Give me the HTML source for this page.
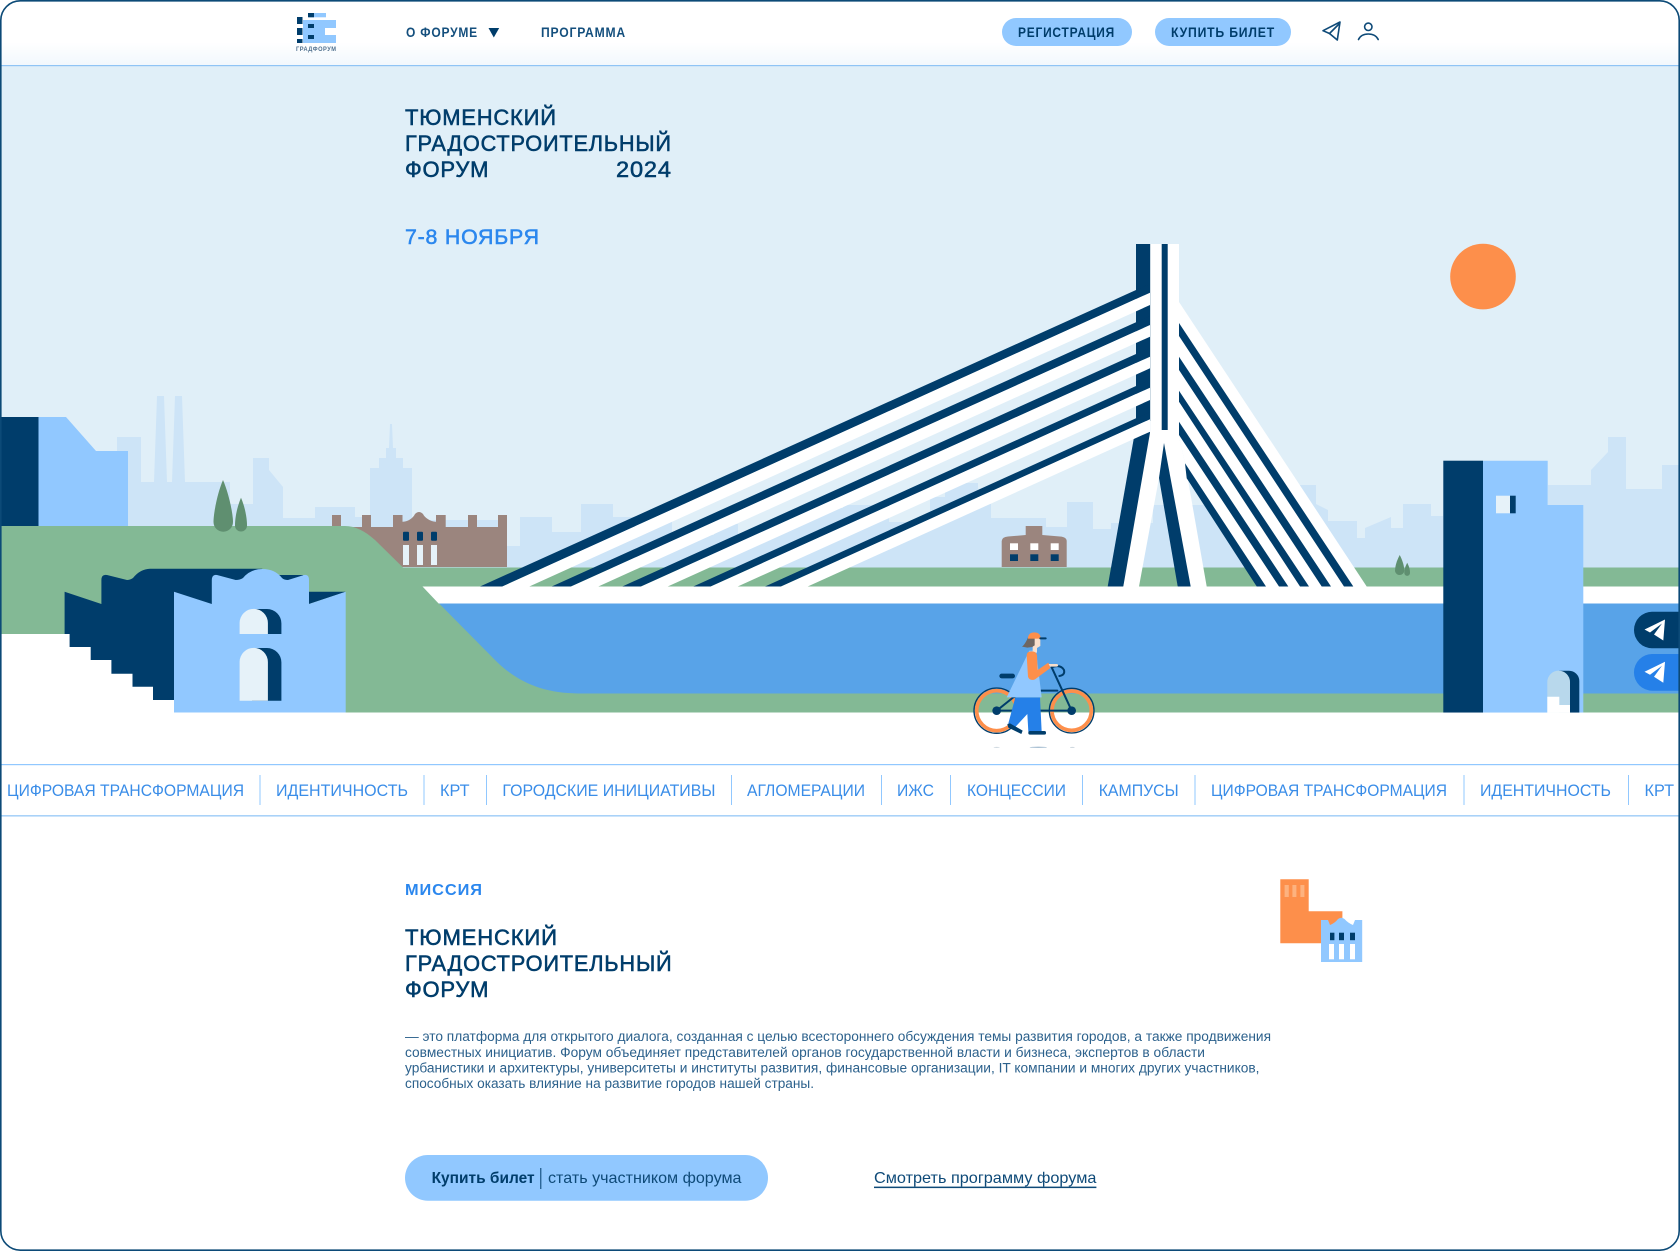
<!DOCTYPE html>
<html lang="ru">
<head>
<meta charset="utf-8">
<title>Тюменский градостроительный форум</title>
<style>
html,body{margin:0;padding:0;background:#fff;width:1680px;height:1251px;overflow:hidden}
svg{display:block;font-family:"Liberation Sans","Noto Sans CJK SC",sans-serif}
.n{fill:#003d6b}
.l{fill:#91c8ff}
.m{stroke:currentColor;stroke-width:.55px}
text{white-space:pre}
</style>
</head>
<body>
<svg xmlns="http://www.w3.org/2000/svg" width="1680" height="1251" viewBox="0 0 1680 1251">
<defs>
<linearGradient id="hd" x1="0" y1="0" x2="0" y2="1"><stop offset="0" stop-color="#fff"/><stop offset=".65" stop-color="#fff"/><stop offset="1" stop-color="#f2f8fd"/></linearGradient>
</defs>
<rect width="1680" height="1251" fill="#fff"/>

<!-- sky -->
<rect y="66" width="1680" height="530" fill="#e0eff8"/>
<!-- skyline -->
<path fill="#cde4f7" d="M117 530V437H141V482H154L157 396H164L167 482H172L175 396H182L185 482H230V504H253V458H269V470L283 487V518H315V507H355V517H370V468H379V458H386V448H389L390 424H392L393 448H396V458H403V468H412V520H507V546H520V517H552V532H581V504H613V517H672V535H714V524H738V535H778V522H803V508H843V505H889V522H930V497H945V483H978V504H991V518H1046V527H1067V502H1093V529H1111V523H1153V505H1300V485H1316V504L1328 510V521H1357V538H1365V528L1391 517V528H1403V504H1431V516H1443V540H1548V485H1591V470L1608 452V437H1626V489H1662V465H1680V575H117Z"/>
<!-- sun -->
<circle cx="1483" cy="276.6" r="32.8" fill="#fd8f4b"/>

<!-- left tall block -->
<rect x="0" y="417" width="38.5" height="112" class="n"/>
<path class="l" d="M38.5 417H66L96 451H128V529H38.5Z"/>

<!-- brown palace -->
<path fill="#9b857e" d="M332 567V515H341V527H362V515H371V527H393V515H402.5V521.7C408 522 413 518 415 514Q419 510 423 514C425 518 431 522 436 521.7V515H445.7V527H468V515H477V527H498V515H507V567Z"/>
<g class="n"><rect x="403" y="531.7" width="6" height="9" rx="1"/><rect x="417" y="531.7" width="6" height="9" rx="1"/><rect x="431" y="531.7" width="6" height="9" rx="1"/></g>
<g fill="#e6f2f9"><rect x="403" y="545" width="6" height="20"/><rect x="417" y="545" width="6" height="20"/><rect x="431" y="545" width="6" height="20"/></g>

<!-- small brown house -->
<path fill="#9b857e" d="M1001.7 567V541Q1002 537 1008 536.5L1025.7 535V526H1042.3V535L1060 536.5Q1066.5 537 1066.7 541V567Z"/>
<g fill="#fff"><rect x="1010" y="543.3" width="8" height="6.7"/><rect x="1030.3" y="543.3" width="8" height="6.7"/><rect x="1050.7" y="543.3" width="8" height="6.7"/></g>
<g class="n"><rect x="1010" y="554.3" width="8" height="6.7"/><rect x="1030.3" y="554.3" width="8" height="6.7"/><rect x="1050.7" y="554.3" width="8" height="6.7"/></g>

<!-- green land -->
<path fill="#83b995" d="M0 526H345C355 526 365 531 375 540L403 567.5H1680V712.5H0Z"/>

<!-- trees -->
<g fill="#5f8f70">
<path d="M223 480C217 494 213.5 514 213.5 522A9.75 9.75 0 0 0 233 522C233 514 229 494 223 480Z"/>
<path d="M241 497.7C237 507 235 518 235 525.5A6 6 0 0 0 247 525.5C247 518 245 507 241 497.7Z"/>
<path d="M1399.7 555C1397 560 1395 566 1395 571A4.7 4.7 0 0 0 1404.3 571C1404.3 566 1402.4 560 1399.7 555Z"/>
<path d="M1407.2 562.7C1405.5 566 1404.3 569 1404.3 573A2.85 2.85 0 0 0 1410 573C1410 569 1408.9 566 1407.2 562.7Z"/>
</g>

<!-- deck and water -->
<path fill="#58a3e8" d="M438.6 603H1680V693.5H578C545 693 520 684 497 662Z"/>
<path fill="#fff" d="M422.5 586.5H1680V603.5H438.6Z"/>

<!-- bridge cables left -->
<rect x="1136" y="244" width="14.3" height="177" class="n"/>
<g class="n">
<path d="M480 586.5L1136 290L1150 284V292.7L502.3 586.5Z"/>
<path d="M551.7 586.5L1136 322.3L1150 316V325L571 586.5Z"/>
<path d="M622.3 586.5L1136 354L1150 348V356.7L641 586.5Z"/>
<path d="M693.3 586.5L1136 386L1150 380V387.7L710.7 586.5Z"/>
<path d="M765 586.5L1136 418.3L1150 412V419.3L781 586.5Z"/>
<path d="M1107.7 586.5L1134 437.3L1150 431.7V470L1123.3 586.5Z"/>
</g>
<g fill="#fff">
<path d="M502.3 586.5L1150 292.7V305L529.3 586.5Z"/>
<path d="M571 586.5L1150 325V336.7L598.3 586.5Z"/>
<path d="M641 586.5L1150 356.7V368.3L667.7 586.5Z"/>
<path d="M710.7 586.5L1150 387.7V400L737.7 586.5Z"/>
<path d="M781 586.5L1150 419.3V431.7L807.7 586.5Z"/>
<rect x="1150.3" y="244" width="28.7" height="194"/>
<path d="M1150.3 431L1123.3 586.5H1139L1159 478L1164 443L1177.7 586.5H1206.7L1185 463L1179 437Z"/>
<path d="M1179 302L1366.7 586.5H1256.7L1185 463L1179 437Z"/>
</g>
<g class="n">
<rect x="1161.7" y="244" width="6" height="186"/>
<path d="M1164 443L1159 478L1177.7 586.5H1190.7Z"/>
<path d="M1179 323L1353.3 586.5H1344L1179 336Z"/>
<path d="M1179 356.7L1331 586.5H1321.7L1179 370Z"/>
<path d="M1179 390.7L1309 586.5H1300L1179 401.7Z"/>
<path d="M1179 421.7L1288.3 586.5H1279L1179 435Z"/>
<path d="M1185 463.3L1266 586.5H1256.7L1186.7 478.3Z"/>
</g>

<!-- left castle -->
<path class="n" d="M64.6 591.7L101.4 604V580Q101.4 574 107 575L127 580Q130 580 133 578Q140 569 150 568.7H262L278 575H303L309 591.7H345.7L309 604L200 712H64.6Z"/>
<path fill="#fff" d="M0 634H69.6V647H90.7V660H111.4V673.7H132.5V686.7H153V700H174V713H0Z"/>
<path class="l" d="M174 591.7L211.8 604V580Q212 574 217 575L235.7 580Q240 580 243 578Q250 569 262.5 569Q275 569 282 578Q284 580 288 580L304 575Q309 574 309 580V604L345.7 591.7V712.5H174Z"/>
<path class="n" d="M252 609H267A14.4 14.4 0 0 1 281.4 623.4V634H252Z"/>
<path fill="#e6f2f9" d="M239.6 634V623A14.1 14.1 0 0 1 267.9 623V634Z"/>
<path class="n" d="M252 648H267A14.4 14.4 0 0 1 281.4 662.4V700.7H252Z"/>
<path fill="#e6f2f9" d="M239.6 700.7V662A14.1 14.1 0 0 1 267.9 662V700.7Z"/>

<!-- right tower -->
<rect x="1443.3" y="460.7" width="39.7" height="252" class="n"/>
<path class="l" d="M1483 460.7H1547.7V505H1583.3V712.7H1483Z"/>
<rect x="1496" y="495.7" width="14" height="17.6" fill="#e6f2f9"/>
<rect x="1510" y="495.7" width="5.7" height="17.6" class="n"/>
<path class="n" d="M1559 670.7H1569A10.3 10.3 0 0 1 1579.3 681V712.7H1559Z"/>
<path fill="#b8d8ec" d="M1547.3 712.7V682A11.35 11.35 0 0 1 1570 682V712.7Z"/>
<path fill="#fff" d="M1547.3 712.7V696.7H1559.3V705H1570V712.7Z"/>

<!-- ground -->
<rect y="712.6" width="1680" height="52" fill="#fff"/>

<!-- cyclist -->
<g transform="translate(940 620) scale(.33333)">
<ellipse cx="170" cy="382" rx="9" ry="1.5" fill="#c9d4dc"/><ellipse cx="295" cy="382" rx="26" ry="2" fill="#a9c0d3"/><ellipse cx="397" cy="382" rx="7" ry="1.5" fill="#c9d4dc"/>
<g fill="none">
<circle cx="170" cy="272" r="68" stroke="#003d6b" stroke-width="4"/>
<circle cx="170" cy="272" r="60" stroke="#fd8f4b" stroke-width="11"/>
<circle cx="395" cy="272" r="67" stroke="#003d6b" stroke-width="4"/>
<circle cx="395" cy="272" r="59" stroke="#fd8f4b" stroke-width="11"/>
<g stroke="#003d6b" stroke-width="6" stroke-linecap="round">
<path d="M170 272H395"/><path d="M170 272L225 228"/><path d="M300 212H352"/><path d="M395 272L335 142"/>
<path d="M335 142Q362 132 372 150Q376 165 358 168"/>
</g>
</g>
<rect x="178" y="161" width="47" height="14" rx="7" fill="#003d6b"/>
<circle cx="170" cy="272" r="13" fill="#003d6b"/><circle cx="395" cy="272" r="13" fill="#003d6b"/>
<path d="M226 232H300L305 335H265L262 282L225 322L205 310Z" fill="#2580e8"/>
<path d="M202 312L210 310L248 332L244 342L205 323Z" fill="#003d6b"/>
<rect x="265" y="333" width="53" height="11" rx="5" fill="#003d6b"/>
<path d="M268 92H288L305 232H200Z" fill="#91c8ff"/>
<path d="M246 80C254 74 260 62 264 52H286V80L262 83Z" fill="#6e6662"/>
<path d="M284 52H301V78L291 84V98H278V80L284 76Z" fill="#f8dfcc"/>
<path d="M264 53Q266 37 283 37Q300 37 302 53Z" fill="#fd8f4b"/>
<rect x="264" y="51" width="38" height="5" fill="#fd8f4b"/>
<rect x="298" y="52" width="22" height="6" rx="3" fill="#003d6b"/>
<path d="M260 106Q260 94 275 94Q290 94 291 106L293 150L325 128L331 144L285 178Q268 184 264 170Z" fill="#fd8f4b"/>
<path d="M326 132H352Q358 138 350 140H330Z" fill="#f8dfcc"/>
</g>

<!-- side buttons -->
<path class="n" d="M1680 611.7H1652.3A18.3 18.3 0 0 0 1652.3 648.3H1680Z"/>
<path fill="#2580e8" d="M1680 654H1652.3A18.3 18.3 0 0 0 1652.3 690.7H1680Z"/>
<g fill="#fff">
<path d="M1665 619.5L1644.5 629.5L1650 632.5L1662 623.5L1654 634.5L1663.3 640.5Z"/>
<path d="M1665 661.8L1644.5 671.8L1650 674.8L1662 665.8L1654 676.8L1663.3 682.8Z"/>
</g>

<!-- header -->
<rect width="1680" height="65" fill="url(#hd)"/>
<rect y="65" width="1680" height="1.2" fill="#8fc4f5"/>
<!-- logo -->
<g class="l"><rect x="309" y="13" width="17" height="4.3"/><rect x="303" y="20" width="33" height="8"/><rect x="303" y="28" width="22" height="7"/><rect x="303" y="35" width="33" height="8"/></g>
<g class="n"><rect x="308" y="13" width="6" height="4.3"/><rect x="297" y="17" width="5.5" height="7"/><rect x="308" y="24" width="6" height="4"/><rect x="297" y="28" width="5.5" height="7"/><rect x="308" y="35" width="6" height="4"/><rect x="297" y="39" width="5.5" height="4"/></g>
<text x="296" y="51" font-size="6" font-weight="700" letter-spacing=".5" fill="#4f708e" textLength="40.5" lengthAdjust="spacingAndGlyphs">ГРАДФОРУМ</text>
<!-- nav -->
<g font-size="13.5" font-weight="700" letter-spacing=".9" fill="#144f7d">
<text x="406" y="37" textLength="72" lengthAdjust="spacingAndGlyphs">О ФОРУМЕ</text>
<text x="541" y="37" textLength="85" lengthAdjust="spacingAndGlyphs">ПРОГРАММА</text>
</g>
<path class="n" d="M488.5 28H499.2L493.8 37.5Z"/>
<!-- buttons -->
<rect x="1002" y="18" width="130" height="28" rx="14" class="l"/>
<rect x="1155" y="18" width="136" height="28" rx="14" class="l"/>
<g font-size="13.5" font-weight="700" letter-spacing=".9" class="n">
<text x="1018" y="37" textLength="97" lengthAdjust="spacingAndGlyphs">РЕГИСТРАЦИЯ</text>
<text x="1171" y="37" textLength="104" lengthAdjust="spacingAndGlyphs">КУПИТЬ БИЛЕТ</text>
</g>
<!-- header icons -->
<g fill="none" stroke="#0e4a78" stroke-width="1.6" stroke-linejoin="round" stroke-linecap="round">
<path d="M1340 22L1323 30.7L1329.5 33.5L1337.3 40Z"/>
<path d="M1329.5 33.5L1339.5 23.5"/>
<circle cx="1368.3" cy="26.8" r="3.7"/>
<path d="M1358.5 39.5Q1361 34 1368.3 34Q1375.6 34 1378.2 39.5"/>
</g>

<!-- hero title -->
<g font-size="22.5" letter-spacing=".8" class="m" fill="#003d6b" color="#003d6b">
<text x="405" y="125" textLength="151.8" lengthAdjust="spacingAndGlyphs">ТЮМЕНСКИЙ</text>
<text x="405" y="151" textLength="266.8" lengthAdjust="spacingAndGlyphs">ГРАДОСТРОИТЕЛЬНЫЙ</text>
<text x="405" y="177" textLength="84.3" lengthAdjust="spacingAndGlyphs">ФОРУМ</text>
<text x="616" y="177" textLength="55.8" lengthAdjust="spacingAndGlyphs">2024</text>
</g>
<text x="405" y="244" font-size="21.5" letter-spacing=".8" class="m" fill="#2b87ee" color="#2b87ee" textLength="134.8" lengthAdjust="spacingAndGlyphs">7-8 НОЯБРЯ</text>

<!-- ticker -->
<rect y="764" width="1680" height="1.2" fill="#91c8ff"/>
<rect y="815" width="1680" height="1.6" fill="#a9d2f8"/>
<g fill="#91c8ff">
<rect x="259.5" y="775" width="1" height="30"/><rect x="423.5" y="775" width="1" height="30"/><rect x="486" y="775" width="1" height="30"/><rect x="731" y="775" width="1" height="30"/><rect x="881" y="775" width="1" height="30"/><rect x="950" y="775" width="1" height="30"/><rect x="1082" y="775" width="1" height="30"/><rect x="1194.5" y="775" width="1" height="30"/><rect x="1463.5" y="775" width="1" height="30"/><rect x="1628" y="775" width="1" height="30"/>
</g>
<g font-size="16.5" fill="#3a8de8">
<text x="7" y="796" textLength="237" lengthAdjust="spacingAndGlyphs">ЦИФРОВАЯ ТРАНСФОРМАЦИЯ</text>
<text x="276" y="796" textLength="132" lengthAdjust="spacingAndGlyphs">ИДЕНТИЧНОСТЬ</text>
<text x="440" y="796" textLength="29.5" lengthAdjust="spacingAndGlyphs">КРТ</text>
<text x="502.4" y="796" textLength="213" lengthAdjust="spacingAndGlyphs">ГОРОДСКИЕ ИНИЦИАТИВЫ</text>
<text x="747" y="796" textLength="118" lengthAdjust="spacingAndGlyphs">АГЛОМЕРАЦИИ</text>
<text x="897" y="796" textLength="37" lengthAdjust="spacingAndGlyphs">ИЖС</text>
<text x="967" y="796" textLength="99" lengthAdjust="spacingAndGlyphs">КОНЦЕССИИ</text>
<text x="1098.7" y="796" textLength="80" lengthAdjust="spacingAndGlyphs">КАМПУСЫ</text>
<text x="1211" y="796" textLength="236" lengthAdjust="spacingAndGlyphs">ЦИФРОВАЯ ТРАНСФОРМАЦИЯ</text>
<text x="1480" y="796" textLength="131" lengthAdjust="spacingAndGlyphs">ИДЕНТИЧНОСТЬ</text>
<text x="1644.5" y="796" textLength="29.5" lengthAdjust="spacingAndGlyphs">КРТ</text>
</g>

<!-- mission -->
<text x="405" y="895" font-size="16" font-weight="700" letter-spacing=".9" fill="#2b87ee" textLength="77.9" lengthAdjust="spacingAndGlyphs">МИССИЯ</text>
<g font-size="22.5" letter-spacing=".8" class="m" fill="#003d6b" color="#003d6b">
<text x="405" y="945" textLength="152.8" lengthAdjust="spacingAndGlyphs">ТЮМЕНСКИЙ</text>
<text x="405" y="971" textLength="267.5" lengthAdjust="spacingAndGlyphs">ГРАДОСТРОИТЕЛЬНЫЙ</text>
<text x="405" y="997" textLength="84.3" lengthAdjust="spacingAndGlyphs">ФОРУМ</text>
</g>
<!-- mission illustration -->
<path fill="#fd8f4b" d="M1280.3 879.3H1308.7V911.3H1342.4V943.3H1280.3Z"/>
<g fill="#fdb27f"><rect x="1284.6" y="885" width="4.2" height="12"/><rect x="1292.4" y="885" width="4" height="12"/><rect x="1300.4" y="885" width="4" height="12"/></g>
<path class="l" d="M1321 962V920H1328L1330 925Q1335 923 1338 919Q1341.3 916.5 1344.5 919Q1348 923 1353 925L1355 920H1362.2V962Z"/>
<g class="n"><rect x="1330" y="932.7" width="4.4" height="7.5"/><rect x="1339" y="932.7" width="5" height="7.5"/><rect x="1350" y="932.7" width="5" height="7.5"/></g>
<g fill="#fff"><rect x="1329" y="944" width="5" height="15.3"/><rect x="1339" y="944" width="5" height="15.3"/><rect x="1350" y="944" width="5" height="15.3"/></g>

<!-- paragraph -->
<g font-size="13.5" fill="#2c618c">
<text x="405" y="1041" textLength="866" lengthAdjust="spacingAndGlyphs">— это платформа для открытого диалога, созданная с целью всестороннего обсуждения темы развития городов, а также продвижения</text>
<text x="405" y="1057" textLength="800" lengthAdjust="spacingAndGlyphs">совместных инициатив. Форум объединяет представителей органов государственной власти и бизнеса, экспертов в области</text>
<text x="405" y="1072.5" textLength="854.5" lengthAdjust="spacingAndGlyphs">урбанистики и архитектуры, университеты и институты развития, финансовые организации, IT компании и многих других участников,</text>
<text x="405" y="1088" textLength="409" lengthAdjust="spacingAndGlyphs">способных оказать влияние на развитие городов нашей страны.</text>
</g>

<!-- CTA -->
<rect x="405" y="1155" width="363" height="45.7" rx="22.8" class="l"/>
<text x="431.6" y="1183" font-size="16" font-weight="700" class="n" textLength="103" lengthAdjust="spacingAndGlyphs">Купить билет</text>
<rect x="540.3" y="1168" width="1" height="21" class="n"/>
<text x="548" y="1183" font-size="16" fill="#0e4a78" textLength="193.5" lengthAdjust="spacingAndGlyphs">стать участником форума</text>
<text x="874" y="1183" font-size="16" fill="#0e4a78" textLength="222.4" lengthAdjust="spacingAndGlyphs">Смотреть программу форума</text>
<rect x="874" y="1186.6" width="222.4" height="1.5" fill="#0e4a78"/>

<!-- frame -->
<path fill="#fff" fill-rule="evenodd" d="M0 0H1680V1251H0ZM20 .7A19.3 19.3 0 0 0 .7 20V1231A19.3 19.3 0 0 0 20 1250.3H1660A19.3 19.3 0 0 0 1679.3 1231V20A19.3 19.3 0 0 0 1660 .7Z"/>
<rect x=".8" y=".8" width="1678.4" height="1249.4" rx="19.5" fill="none" stroke="#0c4a77" stroke-width="1.6"/>
</svg>
</body>
</html>
